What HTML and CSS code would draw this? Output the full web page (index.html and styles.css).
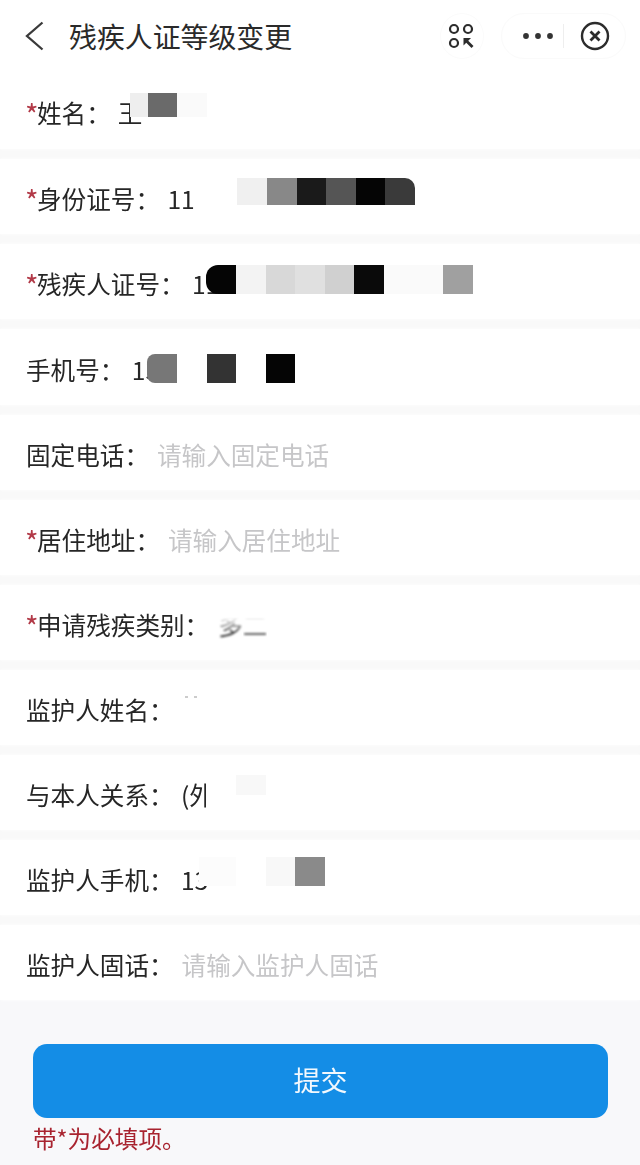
FILE: index.html
```html
<!DOCTYPE html>
<html lang="zh-CN">
<head>
<meta charset="utf-8">
<title>残疾人证等级变更</title>
<link rel="stylesheet" href="styles.css">
</head>
<body>
<div class="page">
  <header class="header">
    <svg class="back" viewBox="0 0 24 36" width="24" height="36"><path d="M20.5 4.5 L5 18 L20.5 31.5" fill="none" stroke="#3a3a3a" stroke-width="2.3"/></svg>
    <h1 class="title">残疾人证等级变更</h1>
    <div class="scan">
      <svg viewBox="0 0 28 28" width="28" height="28"><g fill="none" stroke="#2c2c2c" stroke-width="2.2"><circle cx="6" cy="7" r="4"/><circle cx="20" cy="7" r="4"/><circle cx="6" cy="21" r="4"/></g><path d="M17 17.5 L24.5 25" fill="none" stroke="#2c2c2c" stroke-width="2.8"/><path d="M15.5 16 H23 L15.5 23.5 Z" fill="#2c2c2c"/></svg>
    </div>
    <div class="capsule">
      <svg class="dots" viewBox="0 0 34 8" width="34" height="8"><circle cx="4" cy="4" r="2.9" fill="#333"/><circle cx="16" cy="4" r="2.9" fill="#333"/><circle cx="28" cy="4" r="2.9" fill="#333"/></svg>
      <span class="divider"></span>
      <svg class="close" viewBox="0 0 30 30" width="30" height="30"><circle cx="15" cy="15" r="13" fill="none" stroke="#2c2c2c" stroke-width="2.4"/><path d="M10.5 10.5 L19.5 19.5 M19.5 10.5 L10.5 19.5" stroke="#2c2c2c" stroke-width="2.8"/></svg>
    </div>
  </header>

  <main class="form">
    <div class="row row-first">
      <span class="label"><i class="req">*</i>姓名：</span>
      <span class="val v-name">王</span>
      <div class="mosaic m-name"><b class="c half s-ee"></b><b class="c s-6a"></b><b class="c s-fa"></b></div>
    </div>
    <div class="row">
      <span class="label"><i class="req">*</i>身份证号：</span>
      <span class="val v-id">11</span>
      <div class="mosaic m-id"><b class="c s-f0"></b><b class="c s-88"></b><b class="c s-1a"></b><b class="c s-55"></b><b class="c s-05"></b><b class="c s-3a tr"></b></div>
    </div>
    <div class="row">
      <span class="label"><i class="req">*</i>残疾人证号：</span>
      <span class="val v-card">11</span>
      <div class="mosaic m-card"><b class="c s-05 tl"></b><b class="c s-f3"></b><b class="c s-d8"></b><b class="c s-e0"></b><b class="c s-d0"></b><b class="c s-0a"></b><b class="c s-fa"></b><b class="c s-fa"></b><b class="c s-a0"></b></div>
    </div>
    <div class="row row-fourth">
      <span class="label">手机号：</span>
      <span class="val v-phone">13</span>
      <div class="mosaic m-phone"><b class="c s-77 tl-soft"></b><b class="c s-none"></b><b class="c s-33"></b><b class="c s-none"></b><b class="c s-05"></b></div>
    </div>
    <div class="row">
      <span class="label">固定电话：</span>
      <span class="hint">请输入固定电话</span>
    </div>
    <div class="row">
      <span class="label"><i class="req">*</i>居住地址：</span>
      <span class="hint">请输入居住地址</span>
    </div>
    <div class="row">
      <span class="label"><i class="req">*</i>申请残疾类别：</span>
      <span class="val smudge">多</span><span class="val smudge smudge-2">二</span>
    </div>
    <div class="row">
      <span class="label">监护人姓名：</span>
      <span class="speck"></span>
    </div>
    <div class="row">
      <span class="label">与本人关系：</span>
      <span class="val v-rel">(外</span>
      <div class="mosaic m-rel"><b class="c s-white"></b><b class="c short s-f8"></b></div>
    </div>
    <div class="row">
      <span class="label">监护人手机：</span>
      <span class="val v-gphone">13</span>
      <div class="mosaic m-gphone"><b class="c wide s-fc"></b><b class="c s-none"></b><b class="c s-f8"></b><b class="c s-8a"></b></div>
    </div>
    <div class="row">
      <span class="label">监护人固话：</span>
      <span class="hint">请输入监护人固话</span>
    </div>
  </main>

  <footer class="footer">
    <button class="submit" type="button">提交</button>
    <p class="note">带*为必填项。</p>
  </footer>
</div>
</body>
</html>
```

FILE: styles.css
```css
* { box-sizing: border-box; }
html, body { margin: 0; padding: 0; }
body {
  background: #f8f8fa;
  font-family: "Noto Sans CJK SC", "Noto Sans", sans-serif;
  color: #222;
}
.page {
  width: 640px;
  height: 1165px;
  display: flex;
  flex-direction: column;
  overflow: hidden;
  filter: blur(0.35px);
}
.header {
  height: 72px;
  flex: none;
  background: #fff;
  display: flex;
  align-items: center;
  padding: 0 14px 0 22px;
}
.back { flex: none; }
.title {
  margin: 0 0 0 23px;
  font-size: 27.9px;
  font-weight: 400;
  line-height: 40px;
  color: #2a2a2a;
  flex: 1;
}
.scan {
  width: 44px;
  height: 46px;
  margin-right: 17px;
  border-radius: 50%;
  border: 1px solid #fbfbfb;
  display: flex;
  align-items: center;
  justify-content: center;
}
.capsule {
  width: 125px;
  height: 46px;
  border-radius: 23px;
  border: 1px solid #fafafa;
  display: flex;
  align-items: center;
  padding-left: 20px;
}
.dots { flex: none; }
.divider {
  width: 1px;
  height: 24px;
  margin-left: 7px;
  background: #eee;
}
.close { margin-left: 16px; flex: none; }

.form { flex: none; display: flex; flex-direction: column; background: #f9f9f9; }
.row {
  height: 75px;
  margin-bottom: 10px;
  background: #fff;
  display: flex;
  align-items: center;
  padding: 3px 0 0 26px;
  font-size: 24.6px;
  line-height: 34px;
  white-space: nowrap;
  box-shadow: 0 0 3px #fff;
}
.row-first { height: 77px; }
.row-fourth { height: 76px; }
.row:last-child { margin-bottom: 0; }
.label { flex: none; color: #262626; }
.req {
  font-style: normal;
  font-size: 29px;
  line-height: 0;
  color: #b23a48;
  display: inline-block;
  width: 11px;
  vertical-align: -3px;
  text-indent: -1px;
}
.val {
  margin-left: 7.4px;
  color: #262626;
  flex: none;
}
.v-name { width: 12px; margin-left: 7px; }
.v-id { width: 70px; }
.v-card { width: 14.4px; }
.v-phone { width: 15.6px; }
.v-rel { width: 25.4px; }
.v-gphone { width: 18px; }
.smudge {
  margin-left: 9px;
  color: #444;
  filter: blur(0.8px);
  -webkit-mask-image: linear-gradient(to bottom, transparent 30%, #000 75%);
  mask-image: linear-gradient(to bottom, transparent 30%, #000 75%);
}
.smudge-2 { margin-left: 0; color: #666; }
.speck {
  width: 16px;
  height: 2px;
  margin: -24px 0 0 11px;
  background: repeating-linear-gradient(to right, #ccc 0 3px, #fff 3px 9px);
  filter: blur(0.5px);
}
.hint { margin-left: 8px; color: #c6c6c8; }

.mosaic { display: flex; height: 29px; flex: none; }
.m-name { height: 24px; margin-top: -14px; }
.m-id { height: 27px; margin-top: -13px; }
.m-card { margin-top: -7px; }
.m-phone { height: 29px; margin-top: 0; }
.m-rel { height: 34px; }
.m-gphone { margin-top: -15px; }
.c { display: block; width: 29.6px; height: 100%; }
.half { width: 18px; }
.wide { width: 37px; }
.short { height: 20px; margin-top: -2px; }
.tl { border-radius: 12px 0 0 12px; }
.tl-soft { border-radius: 8px 0 0 8px; }
.tr { border-radius: 0 10px 0 0; }
.s-none { background: transparent; }
.s-white { background: #fff; }
.s-05 { background: #050505; }
.s-0a { background: #0a0a0a; }
.s-1a { background: #1a1a1a; }
.s-33 { background: #333; }
.s-3a { background: #3a3a3a; }
.s-55 { background: #555; }
.s-6a { background: #6a6a6a; }
.s-77 { background: #777; }
.s-88 { background: #888; }
.s-8a { background: #8a8a8a; }
.s-a0 { background: #a0a0a0; }
.s-d0 { background: #d0d0d0; }
.s-d8 { background: #d8d8d8; }
.s-e0 { background: #e0e0e0; }
.s-ee { background: #eee; }
.s-f0 { background: #f0f0f0; }
.s-f3 { background: #f3f3f3; }
.s-f8 { background: #f8f8f8; }
.s-fa { background: #fafafa; }
.s-fc { background: #fcfcfc; }

.footer {
  flex: 1;
  display: flex;
  flex-direction: column;
  padding: 44px 32px 0 33px;
}
.submit {
  height: 74px;
  width: 575px;
  flex: none;
  border: 0;
  border-radius: 14px;
  background: #148de6;
  color: #f2f8fd;
  font: inherit;
  font-size: 27px;
  padding: 0 0 3px;
}
.note {
  margin: 3px 0 0;
  font-size: 23.6px;
  line-height: 34px;
  color: #a8232f;
}
```
